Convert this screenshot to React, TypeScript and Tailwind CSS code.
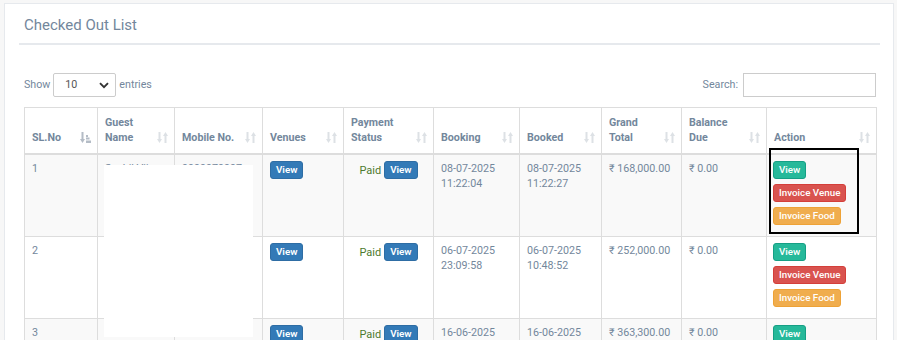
import React from "react";

const font = { fontFamily: "Roboto, 'Noto Sans', 'Liberation Sans', sans-serif" };

function SortIcon({ active = false }: { active?: boolean }) {
  const c = active ? "#b4bcc6" : "#dde1e5";
  if (active) {
    return (
      <svg width="11" height="11" viewBox="0 0 11 11" className="shrink-0">
        <rect x="1.5" y="0" width="2" height="8" fill={c} />
        <path d="M0 7 L5 7 L2.5 11 Z" fill={c} />
        <rect x="6" y="3" width="2" height="2" fill={c} />
        <rect x="6" y="5.5" width="3.5" height="2" fill={c} />
        <rect x="6" y="8.5" width="5" height="2.5" fill={c} />
      </svg>
    );
  }
  return (
    <svg width="11" height="11" viewBox="0 0 11 11" className="shrink-0">
      <rect x="1.5" y="0" width="2" height="8" fill={c} />
      <path d="M0 7 L5 7 L2.5 11 Z" fill={c} />
      <rect x="7.5" y="3" width="2" height="8" fill={c} />
      <path d="M6 4 L11 4 L8.5 0 Z" fill={c} />
    </svg>
  );
}

type BtnColor = "blue" | "green" | "red" | "orange";

function Btn({ color, children }: { color: BtnColor; children: React.ReactNode }) {
  const cls: Record<BtnColor, string> = {
    blue: "bg-[#337ab7] border-[#2e6da4] font-semibold",
    green: "bg-[#26b99a] border-[#169f85] font-medium",
    red: "bg-[#d9534f] border-[#d43f3a] font-medium",
    orange: "bg-[#f0ad4e] border-[#eea236] font-medium",
  };
  return (
    <span
      className={`inline-flex items-center h-[18px] px-[5px] border rounded-[3px] text-[9.8px] leading-none text-white whitespace-nowrap ${cls[color]}`}
    >
      {children}
    </span>
  );
}

const headers: { lines: string[]; active?: boolean }[] = [
  { lines: ["SL.No"], active: true },
  { lines: ["Guest", "Name"] },
  { lines: ["Mobile No."] },
  { lines: ["Venues"] },
  { lines: ["Payment", "Status"] },
  { lines: ["Booking"] },
  { lines: ["Booked"] },
  { lines: ["Grand", "Total"] },
  { lines: ["Balance", "Due"] },
  { lines: ["Action"] },
];

const colWidths = [73, 77, 88, 81, 90, 86, 82, 80, 85, 110];

const rows = [
  {
    sl: "1",
    name: "Sushil Vij",
    mobile: "9999979997",
    booking: ["08-07-2025", "11:22:04"],
    booked: ["08-07-2025", "11:22:27"],
    total: "₹ 168,000.00",
    due: "₹ 0.00",
  },
  {
    sl: "2",
    name: "Rahul Mehra",
    mobile: "9876543210",
    booking: ["06-07-2025", "23:09:58"],
    booked: ["06-07-2025", "10:48:52"],
    total: "₹ 252,000.00",
    due: "₹ 0.00",
  },
  {
    sl: "3",
    name: "Anita Rao",
    mobile: "9812345678",
    booking: ["16-06-2025", "12:10:33"],
    booked: ["16-06-2025", "12:40:05"],
    total: "₹ 363,300.00",
    due: "₹ 0.00",
  },
];

export default function App() {
  return (
    <div className="min-h-[340px] bg-[#f7f7f7] pt-[3px] pl-[4px] pr-[3px] text-[#73879c]" style={font}>
      <div className="bg-white border border-[#e6e9ed] pl-[14px] pr-[13px] pb-[20px]">
        <div className="pt-[10px] pb-[7px] border-b-2 border-[#e6e9ed]">
          <h2 className="pl-[5px] text-[15px] leading-[22px] font-normal text-[#73879c]">Checked Out List</h2>
        </div>

        <div className="pl-[5px] pr-[4px]">
          <div className="mt-[28px] flex items-center justify-between h-[24px] text-[10.7px]">
            <div className="flex items-center">
              <span>Show</span>
              <div className="ml-[3px] mr-[3px] w-[63px] h-[24px] border border-[#cccccc] rounded-[2px] flex items-center justify-between pl-[11px] pr-[6px] text-[#555]">
                <span className="text-[10.7px]">10</span>
                <svg width="10" height="7" viewBox="0 0 10 7">
                  <path d="M1 1.2 L5 5.2 L9 1.2" fill="none" stroke="#333" strokeWidth="1.9" />
                </svg>
              </div>
              <span>entries</span>
            </div>
            <div className="flex items-center">
              <span>Search:</span>
              <div className="ml-[5px] w-[133px] h-[24px] border border-[#cccccc]" />
            </div>
          </div>

          <div className="relative mt-[10px]">
            <table className="table-fixed border-collapse w-[852px] text-[10.7px] leading-[15px]">
              <colgroup>
                {colWidths.map((w, i) => (
                  <col key={i} style={{ width: w }} />
                ))}
              </colgroup>
              <thead>
                <tr>
                  {headers.map((h, i) => (
                    <th
                      key={i}
                      className="border border-[#dddddd] border-b-2 pl-[7px] pr-[6px] pt-[7px] pb-[8px] align-bottom text-left font-bold text-[#73879c]"
                    >
                      <div className="flex items-end justify-between">
                        <div className="whitespace-nowrap">
                          {h.lines.map((l, j) => (
                            <div key={j}>{l}</div>
                          ))}
                        </div>
                        <div className="mb-[2px]">
                          <SortIcon active={h.active} />
                        </div>
                      </div>
                    </th>
                  ))}
                </tr>
              </thead>
              <tbody>
                {rows.map((r, i) => (
                  <tr key={i} className={i % 2 === 0 ? "bg-[#f9f9f9]" : "bg-white"}>
                    <td className="border border-[#dddddd] pl-[7px] pt-[6px] align-top text-[#73879c]">{r.sl}</td>
                    <td className="border border-[#dddddd] pl-[7px] pt-[6px] align-top">{r.name}</td>
                    <td className="border border-[#dddddd] pl-[7px] pt-[6px] align-top">{r.mobile}</td>
                    <td className="border border-[#dddddd] pl-[7px] pt-[6px] align-top">
                      <Btn color="blue">View</Btn>
                    </td>
                    <td className="border border-[#dddddd] pt-[6px] align-top text-center">
                      <span className="inline-flex items-center gap-[3px]">
                        <span className="text-[#4c7a2e] text-[11px]">Paid</span>
                        <Btn color="blue">View</Btn>
                      </span>
                    </td>
                    <td className="border border-[#dddddd] pl-[7px] pt-[6px] align-top">
                      <div>{r.booking[0]}</div>
                      <div>{r.booking[1]}</div>
                    </td>
                    <td className="border border-[#dddddd] pl-[7px] pt-[6px] align-top">
                      <div>{r.booked[0]}</div>
                      <div>{r.booked[1]}</div>
                    </td>
                    <td className="border border-[#dddddd] pl-[7px] pt-[6px] align-top whitespace-nowrap">{r.total}</td>
                    <td className="border border-[#dddddd] pl-[7px] pt-[6px] align-top">{r.due}</td>
                    <td className="border border-[#dddddd] pl-[6px] pt-[6px] pb-[11px] align-top">
                      <div className="flex flex-col items-start gap-[5px]">
                        <Btn color="green">View</Btn>
                        <Btn color="red">Invoice Venue</Btn>
                        <Btn color="orange">Invoice Food</Btn>
                      </div>
                    </td>
                  </tr>
                ))}
              </tbody>
            </table>

            {/* privacy mask over guest name / mobile */}
            <div className="absolute left-[80px] top-[58px] w-[149px] h-[172px] bg-white" />
            {/* annotation rectangle */}
            <div className="absolute left-[745px] top-[41px] w-[90px] h-[86px] border-2 border-black" />
          </div>
        </div>
      </div>
    </div>
  );
}
